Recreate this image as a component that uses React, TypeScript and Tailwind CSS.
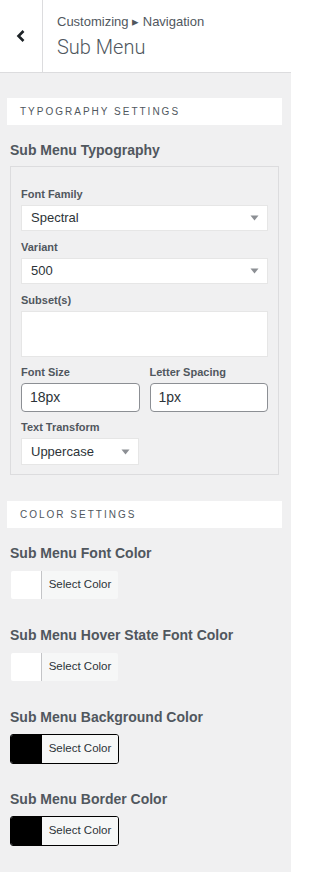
import React from 'react';

const font = { fontFamily: '"Liberation Sans", Arial, sans-serif' };

function SectionBar({ title }: { title: string }) {
  return (
    <div className="ml-[7px] mr-[9px] flex h-[27px] items-center bg-white pl-[13px] text-[10px] uppercase tracking-[2px] text-[#50575e]">
      {title}
    </div>
  );
}

function Caret() {
  return (
    <svg width="9" height="6" viewBox="0 0 9 6" className="shrink-0">
      <path d="M0.5 0.5h8L4.5 5.5z" fill="#8c8f94" />
    </svg>
  );
}

function Select({ value, className = '' }: { value: string; className?: string }) {
  return (
    <div
      className={`flex h-[26px] items-center justify-between border border-[#e6e6e6] bg-white pl-[9px] pr-[8px] text-[13px] text-[#2c3338] ${className}`}
    >
      <span>{value}</span>
      <Caret />
    </div>
  );
}

function Label({ children }: { children: React.ReactNode }) {
  return <div className="mb-[4px] text-[11px] font-bold leading-[13px] text-[#50575e]">{children}</div>;
}

function ColorControl({ title, color }: { title: string; color: 'white' | 'black' }) {
  const dark = color === 'black';
  return (
    <div className="px-[10px]">
      <div className="text-[14px] font-bold leading-[18px] text-[#50575e]">{title}</div>
      <div
        className={`mt-[8px] flex h-[30px] w-[109px] overflow-hidden rounded-[3px] border ${
          dark ? 'border-black' : 'border-[#f0f0f1]'
        }`}
      >
        <div className={`w-[31px] ${dark ? 'bg-black' : 'border-r border-[#c3c4c7] bg-white'}`} />
        <div className="flex flex-1 items-center justify-center bg-[#f6f7f7] text-[11.5px] text-[#2c3338]">
          Select Color
        </div>
      </div>
    </div>
  );
}

export default function App() {
  return (
    <div className="min-h-[872px] w-[291px] bg-[#f0f0f1]" style={font}>
      <div className="flex h-[73px] border-b border-[#dcdcde] bg-white">
        <div className="flex w-[43px] items-center justify-center border-r border-[#dcdcde]">
          <svg width="12" height="14" viewBox="0 0 12 14">
            <path d="M8.5 2L3.5 7l5 5" stroke="#1d2327" strokeWidth="2.6" fill="none" />
          </svg>
        </div>
        <div className="flex flex-col justify-center pl-[14px] text-[#50575e]">
          <div className="text-[13px] leading-[16px]">Customizing ▸ Navigation</div>
          <div
            className="mt-[6px] text-[20px] font-light leading-[22px]"
            style={{ fontFamily: 'Roboto, "Liberation Sans", sans-serif' }}
          >
            Sub Menu
          </div>
        </div>
      </div>

      <div className="pt-[25px]">
        <SectionBar title="Typography Settings" />

        <div className="px-[10px] pt-[16px]">
          <div className="text-[14px] font-bold leading-[18px] text-[#50575e]">Sub Menu Typography</div>
          <div className="mr-[2px] mt-[7px] border border-[#dcdcde] px-[10px] pb-[9px] pt-[21px]">
            <Label>Font Family</Label>
            <Select value="Spectral" />
            <div className="mt-[10px]">
              <Label>Variant</Label>
              <Select value="500" />
            </div>
            <div className="mt-[10px]">
              <Label>Subset(s)</Label>
              <div className="h-[46px] border border-[#e6e6e6] bg-white" />
            </div>
            <div className="mt-[9px] grid grid-cols-2 gap-[10px]">
              <div>
                <Label>Font Size</Label>
                <div className="flex h-[29px] items-center rounded-[4px] border border-[#8c8f94] bg-white pl-[8px] text-[14px] text-[#2c3338]">
                  18px
                </div>
              </div>
              <div>
                <Label>Letter Spacing</Label>
                <div className="flex h-[29px] items-center rounded-[4px] border border-[#8c8f94] bg-white pl-[8px] text-[14px] text-[#2c3338]">
                  1px
                </div>
              </div>
            </div>
            <div className="mt-[9px] w-[118px]">
              <Label>Text Transform</Label>
              <Select value="Uppercase" className="h-[27px]" />
            </div>
          </div>
        </div>

        <div className="mt-[26px]">
          <SectionBar title="Color Settings" />
        </div>

        <div className="flex flex-col gap-[26px] pt-[16px]">
          <ColorControl title="Sub Menu Font Color" color="white" />
          <ColorControl title="Sub Menu Hover State Font Color" color="white" />
          <ColorControl title="Sub Menu Background Color" color="black" />
          <ColorControl title="Sub Menu Border Color" color="black" />
        </div>
      </div>
    </div>
  );
}
